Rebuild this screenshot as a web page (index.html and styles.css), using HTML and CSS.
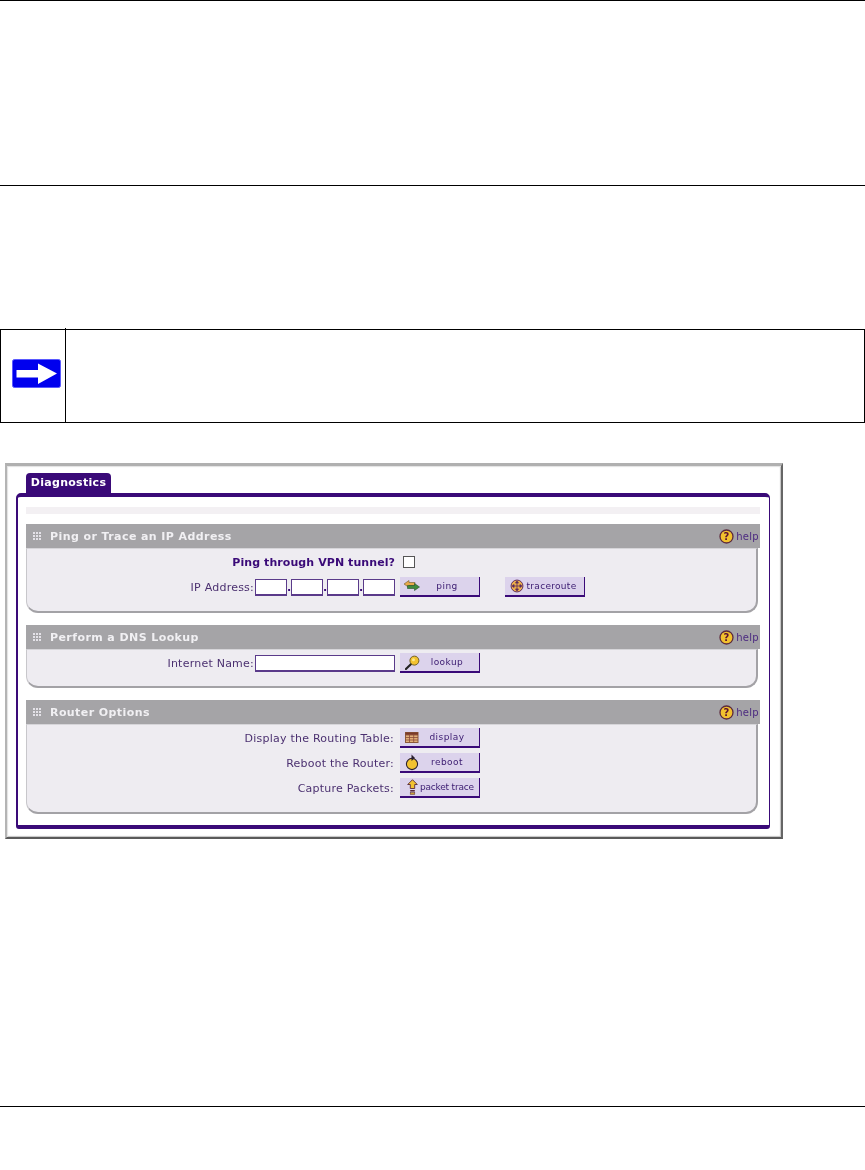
FILE: index.html
```html
<!DOCTYPE html>
<html lang="en">
<head>
<meta charset="utf-8">
<title>Diagnostics</title>
<link rel="stylesheet" href="styles.css">
</head>
<body>
<div class="rule rule-top"></div>
<div class="rule rule-mid"></div>
<div class="note">
  <div class="note-icon">
    <svg width="49" height="29" viewBox="0 0 49 29"><rect x="0.5" y="0.5" width="48" height="28" rx="2" fill="#0000ee" stroke="#5a5aff"/><path d="M4.5 11H26V4.5L45 14.5L26 25V18.5H4.5Z" fill="#fff"/></svg>
  </div>
  <div class="note-text"></div>
</div>
<div class="window">
  <div class="tab">Diagnostics</div>
  <div class="frame">
    <div class="faint"></div>

    <section class="sec">
      <div class="sec-head">
        <svg class="grip" width="8" height="8" viewBox="0 0 8 8"><path d="M0 0h2v2H0zM3 0h2v2H3zM6 0h2v2H6zM0 3h2v2H0zM3 3h2v2H3zM6 3h2v2H6zM0 6h2v2H0zM3 6h2v2H3zM6 6h2v2H6z" fill="#e4e2e8"/></svg>
        <span class="sec-title">Ping or Trace an IP Address</span>
        <span class="help"><svg width="15" height="15" viewBox="0 0 15 15"><circle cx="7.5" cy="7.5" r="6.5" fill="#f2c12e" stroke="#5c2a3c" stroke-width="1.3"/><text x="7.5" y="11.3" text-anchor="middle" class="qm">?</text></svg>help</span>
      </div>
      <div class="sec-body b1">
        <div class="row">
          <div class="left"><span class="strong">Ping through VPN tunnel?</span></div>
          <span class="check"></span>
        </div>
        <div class="row">
          <div class="left"><span class="lab">IP Address:</span><span class="inp"></span><span class="dot">.</span><span class="inp"></span><span class="dot">.</span><span class="inp"></span><span class="dot">.</span><span class="inp"></span></div>
          <div class="btn">
            <svg width="16" height="12" viewBox="0 0 16 12"><path d="M0 4L5 0.5V2.5H11V5.5H5V7.5Z" fill="#e8a94a" stroke="#6b5a30" stroke-width=".6"/><path d="M15.5 7L10.5 3.5V5.5H3.5V8.5H10.5V10.5Z" fill="#3f8a3c" stroke="#24502a" stroke-width=".6"/></svg>
            <span>ping</span>
          </div>
          <div class="btn btn-next">
            <svg width="14" height="14" viewBox="0 0 16 16"><circle cx="8" cy="8" r="6.8" fill="#eeb04a" stroke="#5c2a5c" stroke-width="1.1"/><path d="M8 2.5V13.5M2.5 8H13.5M8 2.5L6.3 4.6H9.7ZM8 13.5L6.3 11.4H9.7ZM2.5 8L4.6 6.3V9.7ZM13.5 8L11.4 6.3V9.7Z" fill="#5c2a5c" stroke="#5c2a5c" stroke-width=".9"/></svg>
            <span>traceroute</span>
          </div>
        </div>
      </div>
    </section>

    <section class="sec">
      <div class="sec-head">
        <svg class="grip" width="8" height="8" viewBox="0 0 8 8"><path d="M0 0h2v2H0zM3 0h2v2H3zM6 0h2v2H6zM0 3h2v2H0zM3 3h2v2H3zM6 3h2v2H6zM0 6h2v2H0zM3 6h2v2H3zM6 6h2v2H6z" fill="#e4e2e8"/></svg>
        <span class="sec-title">Perform a DNS Lookup</span>
        <span class="help"><svg width="15" height="15" viewBox="0 0 15 15"><circle cx="7.5" cy="7.5" r="6.5" fill="#f2c12e" stroke="#5c2a3c" stroke-width="1.3"/><text x="7.5" y="11.3" text-anchor="middle" class="qm">?</text></svg>help</span>
      </div>
      <div class="sec-body b2">
        <div class="row">
          <div class="left"><span class="lab">Internet Name:</span><span class="inp inp-wide"></span></div>
          <div class="btn">
            <svg width="15" height="15" viewBox="0 0 16 16"><path d="M6.5 9.5L1 15" stroke="#222" stroke-width="2.2" stroke-linecap="round"/><circle cx="10" cy="6" r="4.8" fill="#f2c230" stroke="#6a5a20" stroke-width="1"/><circle cx="9" cy="5" r="1.6" fill="#fbe88a"/></svg>
            <span>lookup</span>
          </div>
        </div>
      </div>
    </section>

    <section class="sec">
      <div class="sec-head">
        <svg class="grip" width="8" height="8" viewBox="0 0 8 8"><path d="M0 0h2v2H0zM3 0h2v2H3zM6 0h2v2H6zM0 3h2v2H0zM3 3h2v2H3zM6 3h2v2H6zM0 6h2v2H0zM3 6h2v2H3zM6 6h2v2H6z" fill="#e4e2e8"/></svg>
        <span class="sec-title">Router Options</span>
        <span class="help"><svg width="15" height="15" viewBox="0 0 15 15"><circle cx="7.5" cy="7.5" r="6.5" fill="#f2c12e" stroke="#5c2a3c" stroke-width="1.3"/><text x="7.5" y="11.3" text-anchor="middle" class="qm">?</text></svg>help</span>
      </div>
      <div class="sec-body b3">
        <div class="row">
          <div class="left"><span class="lab">Display the Routing Table:</span></div>
          <div class="btn">
            <svg width="14" height="11" viewBox="0 0 14 11"><rect x="0.5" y="0.5" width="12.5" height="10" fill="#e2b078" stroke="#8a5a3a"/><path d="M0.5 3H13M0.5 5.5H13M0.5 8H13M4.5 3V10.5M8.7 3V10.5" stroke="#8a4a3a" stroke-width=".8" fill="none"/><rect x="0.5" y="0.5" width="12.5" height="2.3" fill="#7a3a2a"/></svg>
            <span>display</span>
          </div>
        </div>
        <div class="row">
          <div class="left"><span class="lab">Reboot the Router:</span></div>
          <div class="btn">
            <svg width="14" height="17" viewBox="0 0 14 17"><circle cx="7" cy="10" r="5.6" fill="#f2c230" stroke="#2a2030" stroke-width="1.1"/><path d="M6.5 0.5L10 4L6.5 7Z" fill="#2a2030"/></svg>
            <span>reboot</span>
          </div>
        </div>
        <div class="row">
          <div class="left"><span class="lab">Capture Packets:</span></div>
          <div class="btn btn-tight">
            <svg width="11" height="16" viewBox="0 0 11 16"><path d="M5.5 0.7L10.3 5.5H7.7V9.5H3.3V5.5H0.7Z" fill="#f2c230" stroke="#5a2a3a" stroke-width=".9"/><rect x="3.2" y="11" width="4.6" height="1.6" fill="#5a2a3a"/><rect x="3.2" y="13.6" width="4.6" height="1.8" fill="#c9a030" stroke="#5a2a3a" stroke-width=".5"/></svg>
            <span>packet trace</span>
          </div>
        </div>
      </div>
    </section>
  </div>
</div>
<div class="rule rule-foot"></div>
</body>
</html>
```

FILE: styles.css
```css
* { box-sizing: border-box; }
html, body { margin: 0; padding: 0; background: #fff; }
body { width: 865px; height: 1170px; overflow: hidden; font-family: "DejaVu Sans", Verdana, sans-serif; font-size: 11px; color: #4b3070; }

.rule { height: 1px; background: #000; }
.rule-top { margin-bottom: 184px; }
.rule-mid { margin-bottom: 143px; }
.rule-foot { margin-top: 267px; }

.note { display: flex; width: 865px; height: 94px; border: 1px solid #000; margin-bottom: 40px; }
.note-icon { width: 65px; border-right: 1px solid #000; display: flex; align-items: center; padding: 0 0 3px 11px; margin-top: -2px; }
.note-text { flex: 1; }

.window { width: 778px; height: 376px; margin-left: 5px; padding: 7px 0 0 0; background: #fff; filter: blur(.35px);
  border-style: solid; border-width: 3px 2px 2px 2px; border-color: #b0b0b0 #666 #5a5a5a #b4b4b4;
  box-shadow: inset 1px 1px 1px #e2e2e2, inset -1px -1px 1px #c4c4c4; }
.tab { width: 85px; height: 21px; margin-left: 19px; background: #3a0a78; color: #fff; font-weight: bold; font-size: 11px; letter-spacing: .3px;
  line-height: 20px; text-align: center; border-radius: 4px 4px 0 0; }
.frame { width: 754px; height: 336px; margin-left: 9px; margin-top: -1px; padding: 10px 9px 0 8px; background: #fff;
  border-style: solid; border-color: #3a0a78; border-width: 4px 1px 4px 2px; border-radius: 5px 5px 3px 3px; }
.faint { height: 7px; background: #f3f0f3; margin-bottom: 10px; }

.sec { margin-bottom: 12px; }
.sec-head { height: 24px; background: #a5a4a7; display: flex; align-items: center; padding: 0 1px 0 7px; color: #f1f0f3; }
.grip { flex: none; }
.sec-title { margin-left: 9px; font-weight: bold; font-size: 11px; letter-spacing: .42px; }
.help { margin-left: auto; display: flex; align-items: center; gap: 2px; color: #4c2a80; font-size: 10px; letter-spacing: .3px; }
.qm { font: bold 10px "DejaVu Sans", sans-serif; fill: #5c1030; }

.sec-body { width: 732px; padding-top: 3px; background: #eeecf1; display: flex; flex-direction: column; gap: 5px;
  border-top: 1px solid #d6d5d9; border-right: 2px solid #a3a2a6; border-bottom: 2px solid #a3a2a6; border-left: 1px solid #c8c7cb;
  border-radius: 0 0 12px 12px; }
.b1 { height: 65px; }
.b2 { height: 39px; }
.b3 { height: 90px; }

.row { display: flex; align-items: center; height: 20px; }
.left { width: 368px; display: flex; justify-content: flex-end; align-items: center; flex: none; }
.strong { font-weight: bold; color: #3a0a78; letter-spacing: .08px; }
.lab { margin-right: 1px; white-space: nowrap; letter-spacing: .23px; }
.inp { width: 32px; height: 17px; background: #fff; border: 1px solid #5a3a8a; border-width: 1px 1px 2px 1px; }
.inp-wide { width: 140px; }
.dot { width: 4px; text-align: center; line-height: 17px; font-weight: bold; color: #3a0a78; }
.check { width: 12px; height: 12px; margin-left: 8px; background: #fff; border: 1px solid #555; }

.btn { width: 80px; height: 20px; margin-left: 5px; display: grid; grid-template-columns: 16px 1fr; align-items: center; padding-left: 4px; background: #dcd3ec; color: #3a1a70;
  font-size: 9px; letter-spacing: .45px; border-right: 1px solid #3a0a78; border-bottom: 2px solid #3a0a78; flex: none; }
.btn svg { justify-self: center; }
.btn span { text-align: center; padding-right: 5px; white-space: nowrap; }
.btn-next { margin-left: 25px; letter-spacing: .3px; }
.btn-next span { padding-right: 6px; }
.btn-tight { letter-spacing: -.2px; }
.btn-tight span { padding-right: 8px; }
```
